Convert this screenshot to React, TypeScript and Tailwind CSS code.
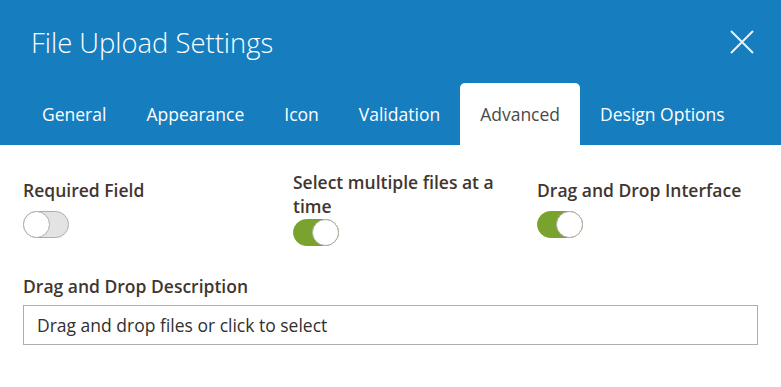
import React from "react";

const tabs = ["General", "Appearance", "Icon", "Validation", "Advanced", "Design Options"];

function Toggle({ on }: { on: boolean }) {
  return (
    <div
      className={`relative h-[27px] w-[46px] rounded-full border ${
        on ? "border-[#79a22e] bg-[#79a22e]" : "border-[#adadad] bg-[#e3e3e3]"
      }`}
    >
      <div
        className={`absolute top-[-1px] h-[27px] w-[27px] rounded-full border border-[#adadad] bg-white ${
          on ? "right-[-1px]" : "left-[-1px]"
        }`}
      />
    </div>
  );
}

export default function App() {
  return (
    <div
      className="h-[387px] w-[781px] bg-white"
      style={{ fontFamily: '"Open Sans", sans-serif' }}
    >
      <div className="bg-[#167ebf] px-[22px]">
        <div className="flex h-[83px] items-start justify-between">
          <h1 className="mt-[25px] pl-[9px] text-[27.4px] font-light leading-[36px] text-white">
            File Upload Settings
          </h1>
          <svg
            className="mr-[5px] mt-[30px]"
            width="24"
            height="24"
            viewBox="0 0 24 24"
            fill="none"
            stroke="#e6f0f7"
            strokeWidth="2"
          >
            <path d="M1 1L23 23M23 1L1 23" />
          </svg>
        </div>
        <div className="flex h-[62px]">
          {tabs.map((t) => (
            <div
              key={t}
              className={`flex items-center px-5 text-[17.5px] ${
                t === "Advanced"
                  ? "rounded-t-[5px] bg-white text-[#4a4a4a]"
                  : "text-white"
              }`}
            >
              {t}
            </div>
          ))}
        </div>
      </div>
      <div className="px-[23px] pt-[25px]">
        <div className="grid grid-cols-[250px_224px_1fr] items-center gap-x-5">
          <div className="flex flex-col">
            <div className="mb-[9px] text-[17.5px] font-semibold leading-[24px] text-[#41362f]">
              Required Field
            </div>
            <Toggle on={false} />
          </div>
          <div className="flex flex-col">
            <div className="mb-[1px] text-[17.5px] font-semibold leading-[24px] text-[#41362f]">
              Select multiple files at a time
            </div>
            <Toggle on={true} />
          </div>
          <div className="flex flex-col">
            <div className="mb-[9px] text-[17.5px] font-semibold leading-[24px] text-[#41362f]">
              Drag and Drop Interface
            </div>
            <Toggle on={true} />
          </div>
        </div>
        <div className="mt-[28px] text-[17.5px] font-semibold leading-[24px] text-[#41362f]">
          Drag and Drop Description
        </div>
        <div className="mt-[7px] flex h-[40px] items-center border border-[#adadad] px-[13px] text-[17.5px] text-[#303030]">
          Drag and drop files or click to select
        </div>
      </div>
    </div>
  );
}
